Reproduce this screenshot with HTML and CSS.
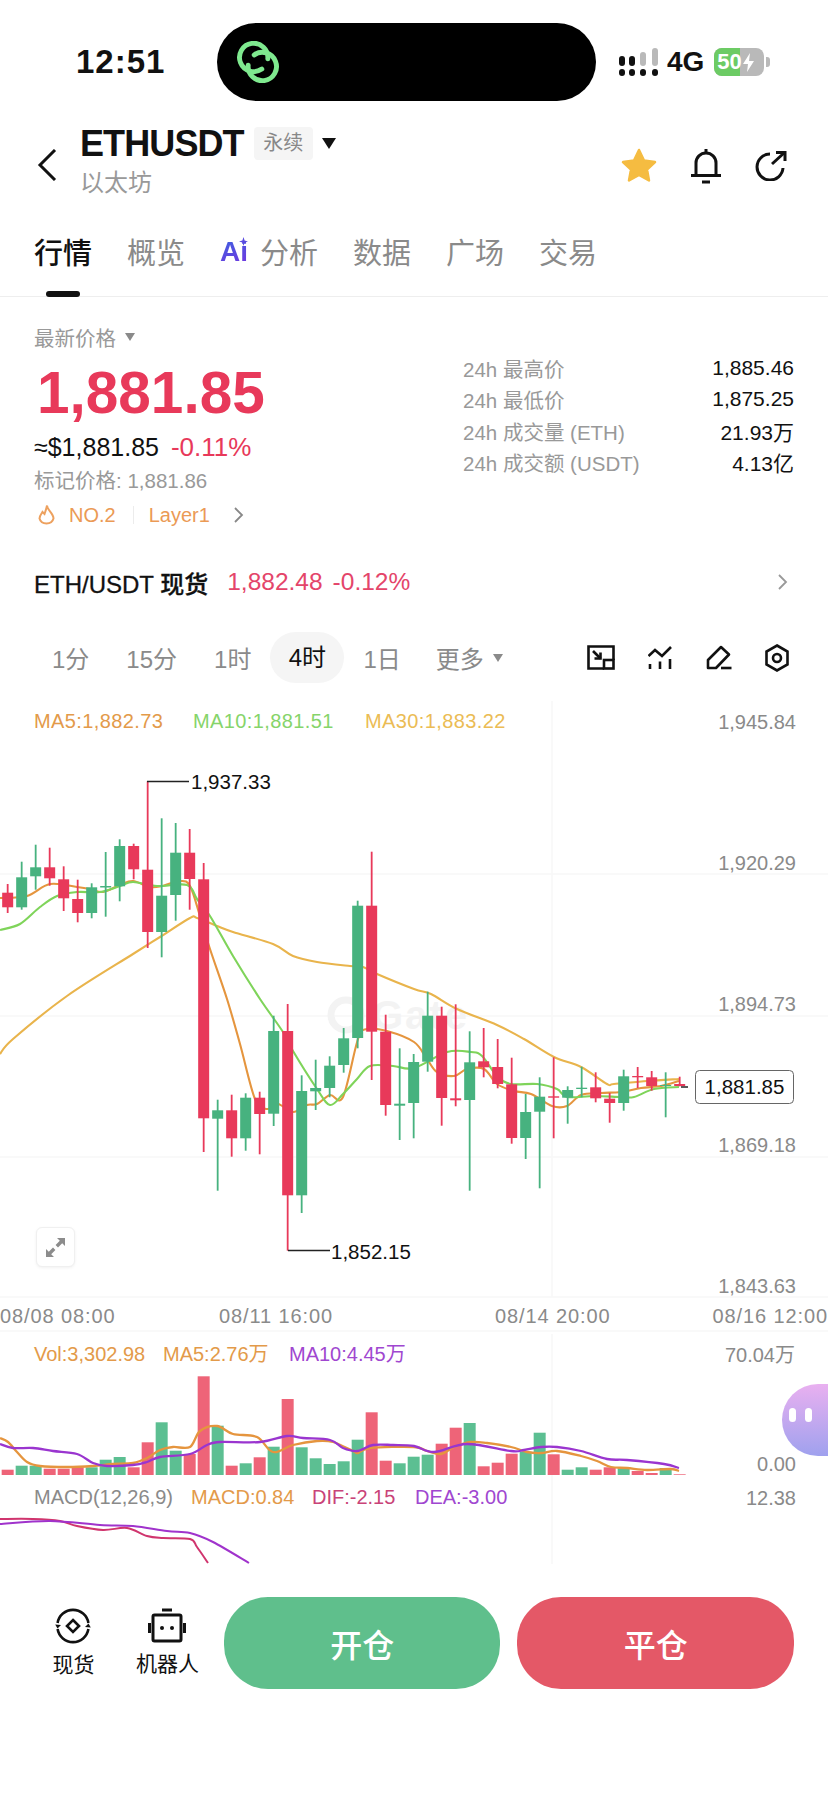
FILE: index.html
```html
<!DOCTYPE html>
<html lang="zh-CN">
<head>
  <meta charset="UTF-8" />
  <title>ETHUSDT</title>
  <link rel="stylesheet" href="styles.css">
</head>
<body>
  <div class="statusbar">
    <div class="clock">12:51</div>
    <div class="island">
      <svg class="island-logo" width="48" height="42" viewBox="0 0 44 38" fill="none" stroke="#7fe98f" stroke-width="4.5" stroke-linecap="round">
        <path d="M25.5 25.5 A13 13 0 1 1 31 16"/>
        <path d="M18.5 12.5 A13 13 0 1 1 13 22"/>
      </svg>
    </div>
    <div class="sys">
      <svg width="40" height="28" viewBox="0 0 40 28">
        <g fill="#111">
          <rect x="0" y="8" width="6" height="10" rx="3"/><rect x="0" y="21" width="6" height="7" rx="3"/>
          <rect x="10" y="8" width="6" height="10" rx="3"/><rect x="10" y="21" width="6" height="7" rx="3"/>
          <rect x="21" y="21" width="6" height="7" rx="3"/><rect x="33" y="21" width="6" height="7" rx="3"/>
        </g>
        <g fill="#b9b9b9">
          <rect x="21" y="4" width="6" height="14" rx="3"/><rect x="33" y="0" width="6" height="18" rx="3"/>
        </g>
      </svg>
      <span class="net">4G</span>
      <div class="battery">
        <div class="battery-level"></div>
        <span class="battery-text">50</span>
        <svg class="battery-bolt" width="11" height="19" viewBox="0 0 11 19"><path d="M7 0 L0 11 H5 L4 19 L11 8 H6 Z" fill="#fff"/></svg>
      </div>
      <div class="battery-tip"></div>
    </div>
  </div>

  <div class="topbar">
    <svg class="back" width="20" height="32" viewBox="0 0 20 32" fill="none" stroke="#111" stroke-width="3"><path d="M18 1 L3 16 L18 31"/></svg>
    <div class="title-block">
      <div class="title-row">
        <span class="symbol">ETHUSDT</span>
        <span class="badge">永续</span>
        <span class="caret caret-black"></span>
      </div>
      <div class="subtitle">以太坊</div>
    </div>
    <div class="top-actions">
      <svg width="36" height="35" viewBox="0 0 36 35"><path d="M18 2 L23 12.5 L34 14 L26 21.5 L28 32.5 L18 27 L8 32.5 L10 21.5 L2 14 L13 12.5 Z" fill="#f5bc41" stroke="#f5bc41" stroke-width="2.5" stroke-linejoin="round"/></svg>
      <svg width="32" height="36" viewBox="0 0 32 36" fill="none" stroke="#111" stroke-width="3"><path d="M6 27 V15 a10 10 0 0 1 20 0 V27"/><path d="M1 27.5 H31"/><path d="M16 1 V5"/><path d="M12 34 H20"/></svg>
      <svg width="33" height="31" viewBox="0 0 33 31" fill="none" stroke="#111" stroke-width="3"><path d="M15 4 A13 13 0 1 0 28 18"/><path d="M17 14 L29 3"/><path d="M21 2.5 H30 V11"/></svg>
    </div>
  </div>

  <div class="tabs">
    <div class="tab active">行情</div>
    <div class="tab">概览</div>
    <div class="tab tab-ai">
      <span class="ai-mark">Ai<svg class="ai-spark" width="9" height="9" viewBox="0 0 9 9"><path d="M4.5 0 L5.6 3.4 L9 4.5 L5.6 5.6 L4.5 9 L3.4 5.6 L0 4.5 L3.4 3.4 Z" fill="#5a4be0"/></svg></span>
      <span>分析</span>
    </div>
    <div class="tab">数据</div>
    <div class="tab">广场</div>
    <div class="tab">交易</div>
  </div>

  <div class="info">
    <div class="info-left">
      <div class="latest-label">最新价格<span class="caret caret-gray"></span></div>
      <div class="price">1,881.85</div>
      <div class="usd-row"><span class="usd">≈$1,881.85</span><span class="down">-0.11%</span></div>
      <div class="mark-price">标记价格: 1,881.86</div>
      <div class="tag-row">
        <svg width="19" height="22" viewBox="0 0 19 22" fill="none" stroke="#eda15f" stroke-width="2"><path d="M10 1.5 C10 6 16.5 9 16.5 14.5 A7.2 6.5 0 0 1 2.5 14.5 C2.5 11.5 4.5 10 5.5 8 C6.5 9 7 9.5 7.5 10 C8.5 7 9.5 4.5 10 1.5 Z"/></svg>
        <span class="tag-text tag-rank">NO.2</span>
        <span class="tag-line"></span>
        <span class="tag-text">Layer1</span>
        <svg class="tag-arrow" width="11" height="16" viewBox="0 0 11 16" fill="none" stroke="#888" stroke-width="1.8"><path d="M2 1 L9 8 L2 15"/></svg>
      </div>
    </div>
    <div class="stats">
      <div class="stat"><span>24h 最高价</span><b>1,885.46</b></div>
      <div class="stat"><span>24h 最低价</span><b>1,875.25</b></div>
      <div class="stat"><span>24h 成交量 (ETH)</span><b>21.93万</b></div>
      <div class="stat"><span>24h 成交额 (USDT)</span><b>4.13亿</b></div>
    </div>
  </div>

  <div class="spot">
    <span class="spot-name">ETH/USDT 现货</span>
    <span class="spot-num">1,882.48</span>
    <span class="spot-num spot-pct">-0.12%</span>
    <svg class="spot-arrow" width="11" height="16" viewBox="0 0 11 16" fill="none" stroke="#999" stroke-width="1.8"><path d="M2 1 L9 8 L2 15"/></svg>
  </div>

  <div class="periods">
    <span class="period">1分</span>
    <span class="period">15分</span>
    <span class="period">1时</span>
    <span class="period on">4时</span>
    <span class="period">1日</span>
    <span class="period more">更多<span class="caret caret-gray"></span></span>
    <div class="tools">
      <svg width="28" height="25" viewBox="0 0 28 25" fill="none" stroke="#111" stroke-width="2.6"><path d="M17 23.5 H1.5 V1.5 H26.5 V15"/><rect x="17" y="15" width="9.5" height="8.5"/><path d="M6 6 L13.5 13.5"/><path d="M13.5 7.5 V13.5 H7.5"/></svg>
      <svg width="24" height="24" viewBox="0 0 24 24" fill="none" stroke="#111" stroke-width="2.6"><path d="M0.5 10 L7 4 L14 10 L23 1"/><path d="M2 18 V23"/><path d="M12 15.5 V23"/><path d="M22 13 V23"/></svg>
      <svg width="26" height="25" viewBox="0 0 26 25" fill="none" stroke="#111" stroke-width="2.6" stroke-linejoin="round"><path d="M2 15 L15 2 L23 9.5 L10 23 H2 Z"/><path d="M15 23 H25.5"/></svg>
      <svg width="24" height="28" viewBox="0 0 24 28" fill="none" stroke="#111" stroke-width="2.6"><path d="M12 1.5 L22.5 7.5 V20.5 L12 26.5 L1.5 20.5 V7.5 Z"/><circle cx="12" cy="14" r="4"/></svg>
    </div>
  </div>

  <div class="chart">
    <svg id="chartSvg" width="828" height="865" viewBox="0 700 828 865">
      <g class="grid">
        <path d="M0 875 H828 M0 1017 H828 M0 1158 H828 M0 1298 H828 M0 1332 H828"/>
        <path d="M552 702 V1298 M552 1335 V1565"/>
      </g>
      <circle class="watermark-ring" cx="346" cy="1016" r="15"/>
      <text class="watermark" x="372" y="1030">Gate</text>
      <g id="maLines"></g>
      <g id="candles"></g>
      <g id="volBars"></g>
      <g id="volLines"></g>
      <g id="macdLines"></g>

      <text class="t legend c-ma5" x="34" y="729">MA5:1,882.73</text>
      <text class="t legend c-ma10" x="193" y="729">MA10:1,881.51</text>
      <text class="t legend c-ma30" x="365" y="729">MA30:1,883.22</text>

      <text class="t axis end" x="796" y="730">1,945.84</text>
      <text class="t axis end" x="796" y="871">1,920.29</text>
      <text class="t axis end" x="796" y="1012">1,894.73</text>
      <text class="t axis end" x="796" y="1153">1,869.18</text>
      <text class="t axis end" x="796" y="1294">1,843.63</text>

      <path class="mark-line" d="M147 782.5 H189"/>
      <text class="t mark" x="191" y="790">1,937.33</text>
      <path class="mark-line" d="M288 1251.5 H330"/>
      <text class="t mark" x="331" y="1260">1,852.15</text>

      <path class="mark-line" d="M681 1088 H688"/>
      <rect class="last-box" x="695.5" y="1071.5" width="98" height="33" rx="4"/>
      <text class="t mark mid" x="744.5" y="1095">1,881.85</text>

      <text class="t axis time" x="0" y="1324">08/08 08:00</text>
      <text class="t axis time" x="219" y="1324">08/11 16:00</text>
      <text class="t axis time" x="495" y="1324">08/14 20:00</text>
      <text class="t axis time end" x="828" y="1324">08/16 12:00</text>

      <text class="t c-ma5" x="34" y="1362">Vol:3,302.98</text>
      <text class="t c-ma5" x="163" y="1362">MA5:2.76万</text>
      <text class="t c-purple" x="289" y="1362">MA10:4.45万</text>
      <text class="t axis end" x="795" y="1363">70.04万</text>
      <text class="t axis end" x="796" y="1472">0.00</text>

      <text class="t axis" x="34" y="1505">MACD(12,26,9)</text>
      <text class="t c-ma5" x="191" y="1505">MACD:0.84</text>
      <text class="t c-dif" x="312" y="1505">DIF:-2.15</text>
      <text class="t c-purple" x="415" y="1505">DEA:-3.00</text>
      <text class="t axis end" x="796" y="1506">12.38</text>
    </svg>

    <div class="expand">
      <svg width="21" height="21" viewBox="0 0 21 21" fill="#8c8c8c"><path d="M12 1 H20 V9 L17.2 6.2 L13 10.4 L10.6 8 L14.8 3.8 Z"/><path d="M9 20 H1 V12 L3.8 14.8 L8 10.6 L10.4 13 L6.2 17.2 Z"/></svg>
    </div>
    <div class="assistant"><span></span><span></span></div>
  </div>

  <div class="actions">
    <div class="tool">
      <svg width="36" height="36" viewBox="0 0 36 36" fill="none" stroke="#111" stroke-width="2.6">
        <path d="M2.6 15 A15.6 15.6 0 0 1 33.4 15"/>
        <path d="M33.4 21 A15.6 15.6 0 0 1 2.6 21"/>
        <path d="M30 19 L33.5 15.5 L35.8 19.5 Z" fill="#111" stroke="none"/>
        <path d="M6 17 L2.5 20.5 L0.2 16.5 Z" fill="#111" stroke="none"/>
        <path d="M18 12 L24 18 L18 24 L12 18 Z"/>
      </svg>
      <span>现货</span>
    </div>
    <div class="tool">
      <svg width="38" height="35" viewBox="0 0 38 35" fill="none" stroke="#111" stroke-width="3">
        <path d="M14 2 H24"/>
        <rect x="5" y="7" width="28" height="26" rx="1.5"/>
        <path d="M1.5 15 V25 M36.5 15 V25"/>
        <circle cx="14" cy="20" r="2" fill="#111" stroke="none"/>
        <circle cx="24" cy="20" r="2" fill="#111" stroke="none"/>
      </svg>
      <span>机器人</span>
    </div>
    <button class="btn btn-open">开仓</button>
    <button class="btn btn-close">平仓</button>
  </div>

  <script src="chart.js"></script>
</body>
</html>
```

FILE: styles.css
```css
* {
  box-sizing: border-box;
  margin: 0;
  padding: 0;
}

body {
  width: 828px;
  height: 1796px;
  overflow: hidden;
  background: #fff;
  color: #111;
  font-family: "Liberation Sans", "Noto Sans CJK SC", sans-serif;
}

/* status bar */
.statusbar {
  display: flex;
  height: 124px;
  padding-top: 23px;
}

.clock {
  width: 217px;
  height: 78px;
  padding-left: 76px;
  font-size: 33px;
  font-weight: 700;
  line-height: 78px;
  letter-spacing: 1px;
}

.island {
  display: flex;
  align-items: center;
  width: 379px;
  height: 78px;
  padding-left: 17px;
  border-radius: 39px;
  background: #000;
}

.sys {
  display: flex;
  align-items: center;
  height: 78px;
  padding-left: 23px;
}

.net {
  margin-left: 8px;
  font-size: 28px;
  font-weight: 700;
}

.battery {
  position: relative;
  display: flex;
  align-items: center;
  width: 50px;
  height: 28px;
  margin-left: 10px;
  border-radius: 8px;
  background: #b9b9b9;
  overflow: hidden;
}

.battery-level {
  position: absolute;
  left: 0;
  top: 0;
  width: 26px;
  height: 100%;
  background: #6ccb64;
}

.battery-text {
  position: relative;
  margin-left: 3px;
  color: #fff;
  font-size: 22px;
  font-weight: 700;
}

.battery-bolt {
  position: relative;
  margin-left: 1px;
}

.battery-tip {
  width: 4px;
  height: 10px;
  margin-left: 2px;
  border-radius: 0 3px 3px 0;
  background: #b9b9b9;
}

/* header */
.topbar {
  display: flex;
  height: 76px;
  padding: 3px 40px 0 37px;
}

.back {
  margin-top: 22px;
}

.title-block {
  margin-left: 23px;
}

.title-row {
  display: flex;
  align-items: center;
  height: 33px;
}

.symbol {
  font-size: 36px;
  font-weight: 700;
  letter-spacing: -0.9px;
}

.badge {
  width: 59px;
  height: 33px;
  margin-left: 10px;
  border-radius: 4px;
  background: #f5f5f5;
  color: #888;
  font-size: 20px;
  line-height: 33px;
  text-align: center;
}

.caret {
  display: inline-block;
  width: 0;
  height: 0;
  border-style: solid;
  border-color: transparent;
}

.caret-black {
  margin-left: 9px;
  border-width: 11px 7.5px 0;
  border-top-color: #111;
}

.caret-gray {
  margin-left: 9px;
  border-width: 8px 5.5px 0;
  border-top-color: #8a8a8a;
}

.subtitle {
  height: 40px;
  color: #999;
  font-size: 24px;
  line-height: 46px;
}

.top-actions {
  display: flex;
  align-items: center;
  gap: 33px;
  height: 35px;
  margin-left: auto;
  margin-top: 21px;
}

/* tabs */
.tabs {
  display: flex;
  gap: 35px;
  height: 97px;
  padding: 37px 0 0 34px;
  border-bottom: 1px solid #eee;
}

.tab {
  position: relative;
  height: 34px;
  color: #8a8a8a;
  font-size: 29px;
  line-height: 34px;
}

.tab.active {
  color: #111;
  font-weight: 500;
}

.tab.active::after {
  content: "";
  position: absolute;
  left: 12px;
  top: 54px;
  width: 34px;
  height: 6px;
  border-radius: 3px;
  background: #111;
}

.tab-ai {
  display: flex;
  gap: 11px;
}

.ai-mark {
  position: relative;
  width: 29px;
  background: linear-gradient(160deg, #3a63e0, #7d2ee0);
  -webkit-background-clip: text;
  background-clip: text;
  color: transparent;
  font-size: 28px;
  font-weight: 700;
  line-height: 30px;
}

.ai-spark {
  position: absolute;
  left: 19px;
  top: 0;
}

/* price info */
.info {
  display: flex;
  padding: 25px 34px 0;
}

.info-left {
  width: 429px;
}

.latest-label {
  display: flex;
  align-items: center;
  height: 30px;
  color: #999;
  font-size: 20.5px;
}

.price {
  height: 60px;
  margin-top: 9px;
  padding-left: 3px;
  color: #e8395a;
  font-size: 58.5px;
  font-weight: 700;
  line-height: 64px;
}

.usd-row {
  display: flex;
  align-items: center;
  gap: 12px;
  height: 34px;
  margin-top: 9px;
  font-size: 25px;
}

.down {
  color: #e8395a;
  font-size: 26px;
}

.mark-price {
  height: 30px;
  margin-top: 2px;
  color: #999;
  font-size: 20.5px;
  line-height: 30px;
}

.tag-row {
  display: flex;
  align-items: center;
  height: 30px;
  margin-top: 4px;
  padding-left: 3px;
}

.tag-text {
  color: #eb9a55;
  font-size: 20px;
}

.tag-rank {
  margin-left: 13px;
}

.tag-line {
  width: 1px;
  height: 18px;
  margin: 0 15px 0 17px;
  background: #ececec;
}

.tag-arrow {
  margin-left: 23px;
}

.stats {
  display: grid;
  grid-auto-rows: 31.5px;
  width: 331px;
  margin-top: 30px;
}

.stat {
  display: flex;
  justify-content: space-between;
  align-items: center;
  color: #999;
  font-size: 20.5px;
}

.stat b {
  color: #111;
  font-size: 21px;
  font-weight: 400;
}

/* spot row */
.spot {
  display: flex;
  align-items: center;
  height: 44px;
  margin-top: 30px;
  padding: 0 40px 0 34px;
  font-size: 24px;
}

.spot-name {
  font-weight: 500;
  -webkit-text-stroke: 0.3px #111;
}

.spot-num {
  margin-left: 19px;
  color: #e4456a;
  font-size: 24.5px;
}

.spot-pct {
  margin-left: 10px;
}

.spot-arrow {
  margin-left: auto;
}

/* chart period row */
.periods {
  display: flex;
  align-items: center;
  height: 51px;
  margin: 28px 0 16px;
  padding-left: 52px;
  color: #8a8a8a;
  font-size: 24px;
}

.period {
  margin-right: 37px;
}

.period.on {
  width: 74px;
  height: 51px;
  margin: 0 19px 0 -18px;
  border-radius: 26px;
  background: #f5f5f5;
  color: #111;
  line-height: 51px;
  text-align: center;
}

.more {
  display: flex;
  align-items: center;
  margin-left: -2px;
}

.tools {
  display: flex;
  align-items: center;
  gap: 33.5px;
  margin-left: auto;
  padding-right: 39px;
}

/* chart */
.chart {
  position: relative;
  height: 865px;
}

.chart svg {
  display: block;
}

.grid path {
  fill: none;
  stroke: #f7f7f7;
  stroke-width: 1.5;
}

.watermark {
  fill: #f3f3f3;
  font-size: 40px;
  font-weight: 700;
  letter-spacing: 2px;
}

.watermark-ring {
  fill: none;
  stroke: #f3f3f3;
  stroke-width: 7;
}

.t {
  font-size: 20px;
}

.legend {
  letter-spacing: 0.4px;
}

.end {
  text-anchor: end;
}

.mid {
  text-anchor: middle;
}

.axis {
  fill: #8a8a8a;
}

.time {
  letter-spacing: 0.9px;
}

.c-ma5 {
  fill: #e39a4a;
}

.c-ma10 {
  fill: #86d46a;
}

.c-ma30 {
  fill: #ebbc55;
}

.c-purple {
  fill: #a047d0;
}

.c-dif {
  fill: #c94378;
}

.mark {
  fill: #111;
  font-size: 20.5px;
}

.mark-line {
  fill: none;
  stroke: #222;
  stroke-width: 1.5;
}

.last-box {
  fill: #fff;
  stroke: #666;
  stroke-width: 1;
}

.expand {
  position: absolute;
  left: 36px;
  top: 528px;
  display: flex;
  align-items: center;
  justify-content: center;
  width: 39px;
  height: 40px;
  border: 1px solid #f0f0f0;
  border-radius: 6px;
  background: #fff;
  box-shadow: 0 1px 3px rgba(0, 0, 0, 0.06);
}

.assistant {
  position: absolute;
  left: 782px;
  top: 685px;
  display: flex;
  align-items: center;
  gap: 9px;
  width: 46px;
  height: 72px;
  padding: 0 0 10px 7px;
  border-radius: 36px 0 0 36px;
  background: linear-gradient(180deg, #e9b0f0, #9fa1ee);
}

.assistant span {
  width: 7px;
  height: 14px;
  border-radius: 4px;
  background: #fff;
}

/* bottom actions */
.actions {
  display: flex;
  padding: 33px 34px 0 42px;
}

.tool {
  display: flex;
  flex-direction: column;
  align-items: center;
  width: 63px;
  margin-right: 31px;
  padding-top: 11px;
  font-size: 21px;
}

.tool span {
  margin-top: 7px;
  line-height: 28px;
  white-space: nowrap;
}

.btn {
  width: 277px;
  height: 92px;
  border: none;
  border-radius: 44px;
  color: #fff;
  font-family: inherit;
  font-size: 32px;
  font-weight: 500;
}

.btn-open {
  margin-left: -6px;
  background: #5fbf8c;
}

.btn-close {
  margin-left: 17px;
  background: #e45867;
}
```

FILE: chart.js
```js
const NS = "http://www.w3.org/2000/svg";
const RED = "#e8395a";
const GREEN = "#47b27f";
const BAR_RED = "#ee6478";
const BAR_GREEN = "#5cbf92";
const BASE = 1476;

// color, wick top, wick bottom, body top, body bottom
const candles = [
  ["r",885,914,893.7,908.3],["g",862.7,910.7,878.3,908.3],["g",845.7,890.7,868.3,877.3],["r",848.7,886.7,868.3,879.3],
  ["r",867.3,912,880.3,899.3],["r",880.7,923.3,900,914],["g",884.3,919.3,888.3,914],["g",853,917.7,887,888.5],
  ["g",840.3,902.3,847,887.3],["r",844.7,880.3,847,870.3],["r",782.3,949,870.7,933],["g",819.3,958.3,896.7,933],
  ["g",824,921.7,853.7,896],["r",830,910.7,853.7,880],["r",864,1153,880.3,1119.3],["g",1100.7,1191.7,1111.3,1119.7],
  ["r",1095.7,1157.7,1111.3,1139.3],["g",1094.3,1151.7,1098.7,1139.3],["r",1092.7,1155.3,1098.7,1115],["g",1016.7,1127,1032,1114.7],
  ["r",1005,1251.7,1032,1196.3],["g",1076.3,1214,1092,1196.3],["g",1060.7,1111,1089,1092.3],["g",1057.3,1098.3,1066.7,1089],
  ["g",1029,1073.7,1039.3,1066],["g",901.7,1049.3,906.7,1039],["r",852.7,1081,906.7,1032.7],["r",1015.7,1116.7,1032.7,1106],
  ["g",1049.3,1141,1104.7,1106.7],["g",1055,1139.3,1063,1104],["g",992.7,1072.7,1016.7,1062.7],["r",1007.7,1126.7,1016.7,1099],
  ["r",1005.3,1107.3,1099.3,1101.3],["g",1032.3,1191.7,1063.3,1101],["r",1029,1078.3,1062.3,1068.3],["r",1040,1089.3,1068,1085],
  ["r",1058.7,1144.7,1085.3,1139],["g",1095,1160,1113,1139],["g",1078.3,1189.3,1097.7,1112.7],["r",1058.3,1139.3,1097.3,1098.7],
  ["g",1087.3,1124.7,1091,1098.7],["g",1067.7,1098.3,1088.7,1090],["r",1073.3,1103.3,1088.3,1099.3],["r",1094,1123.7,1099.7,1104],
  ["g",1070.7,1111.7,1077.3,1104],["r",1068,1089,1077,1078.3],["r",1072,1091.7,1078.3,1087],["g",1073.3,1118.3,1086,1087],
  ["r",1077.7,1087.3,1085,1087]
];

const volumes = [
  ["r",5.3],["g",9.3],["g",9.3],["r",6.3],["r",6.3],["r",7.7],["g",7.7],["g",15.3],["g",18],["r",7.7],
  ["r",32.7],["g",52.7],["g",24.3],["r",21],["r",98.7],["g",49.3],["r",9.3],["g",11.7],["r",17.7],["g",28.3],
  ["r",76],["g",27.7],["g",16.7],["g",11],["g",13.7],["g",35.3],["r",62.7],["r",14.3],["g",11.7],["g",18.3],
  ["g",20.3],["r",31.3],["r",47.3],["g",52],["r",8.7],["r",12.3],["r",21.3],["g",23.3],["g",42.3],["r",20.7],
  ["g",5.3],["g",7.7],["r",5.3],["r",7.7],["g",6.7],["r",4],["r",2],["g",7],["r",0.7]
];

const ma5 = [[0,899],[27,897],[50,885],[77,888],[90,890],[103,893],[120,886],[133,882],[150,888],[162,887],[180,882],[190,887],[200,917],[210,950],[227,1000],[240,1045],[255,1100],[267,1110],[278,1105],[293,1113],[307,1106],[317,1105],[330,1096],[343,1098],[358,1040],[367,1030],[387,1032],[414,1043],[427,1060],[437,1073],[454,1077],[467,1070],[484,1070],[497,1085],[514,1092],[531,1095],[552,1107],[567,1107],[581,1096],[601,1094],[621,1093],[641,1089],[661,1087],[679,1082]];
const ma10 = [[0,931],[20,925],[40,908],[57,897],[77,893],[100,893],[120,887],[133,883],[157,887],[187,886],[197,900],[210,917],[233,957],[260,1000],[283,1033],[293,1052],[317,1090],[330,1106],[343,1095],[357,1080],[370,1067],[393,1067],[414,1069],[447,1053],[471,1053],[482,1057],[497,1077],[511,1085],[537,1085],[557,1090],[567,1098],[594,1097],[621,1098],[634,1098],[654,1090],[679,1088]];
const ma30 = [[0,1055],[13,1040],[67,997],[133,955],[160,938],[190,919],[197,919],[217,927],[233,933],[273,945],[293,957],[317,963],[350,967],[363,968],[377,975],[414,990],[431,995],[457,1010],[497,1026],[524,1040],[554,1058],[581,1068],[607,1085],[614,1085],[647,1082],[679,1080]];

const volMa5 = [[0,1439],[8,1443],[17,1453],[27,1463],[40,1467],[67,1468],[93,1467],[113,1465],[133,1464],[147,1459],[160,1451],[173,1448],[190,1448],[200,1432],[217,1427],[233,1435],[257,1438],[273,1453],[293,1446],[317,1442],[333,1443],[353,1452],[358,1454],[370,1449],[414,1448],[427,1452],[441,1455],[454,1448],[471,1443],[487,1444],[511,1448],[527,1453],[541,1454],[557,1452],[581,1457],[597,1462],[611,1468],[627,1469],[647,1471],[671,1470],[679,1472]];
const volMa10 = [[0,1445],[13,1449],[33,1449],[53,1452],[77,1455],[93,1464],[107,1467],[133,1466],[147,1463],[160,1458],[190,1455],[207,1446],[220,1443],[260,1443],[287,1437],[303,1439],[330,1441],[343,1449],[357,1452],[373,1446],[393,1446],[414,1447],[434,1453],[467,1445],[511,1452],[524,1451],[541,1448],[557,1448],[581,1452],[607,1460],[627,1461],[664,1465],[679,1469]];
const dif = [[0,1520],[33,1520],[60,1522],[77,1527],[103,1531],[127,1529],[147,1537],[163,1539],[190,1540],[197,1548],[208,1564]];
const dea = [[0,1525],[50,1522],[100,1526],[133,1527],[167,1532],[190,1534],[213,1543],[249,1564]];

function el(parent, name, attrs) {
  const node = document.createElementNS(NS, name);
  for (const key in attrs) node.setAttribute(key, attrs[key]);
  parent.appendChild(node);
  return node;
}

// catmull-rom through the points, so the averages bend like the real ones
function smooth(pts) {
  let d = "M" + pts[0][0] + " " + pts[0][1];
  for (let i = 0; i < pts.length - 1; i++) {
    const p0 = pts[i - 1] || pts[i];
    const p1 = pts[i];
    const p2 = pts[i + 1];
    const p3 = pts[i + 2] || p2;
    const c1x = p1[0] + (p2[0] - p0[0]) / 6;
    const c1y = p1[1] + (p2[1] - p0[1]) / 6;
    const c2x = p2[0] - (p3[0] - p1[0]) / 6;
    const c2y = p2[1] - (p3[1] - p1[1]) / 6;
    d += ` C${c1x} ${c1y} ${c2x} ${c2y} ${p2[0]} ${p2[1]}`;
  }
  return d;
}

function line(group, pts, color, width) {
  el(group, "path", { d: smooth(pts), fill: "none", stroke: color, "stroke-width": width });
}

const maGroup = document.getElementById("maLines");
line(maGroup, ma30, "#e9b44c", 2.1);
line(maGroup, ma5, "#e5953e", 2.1);
line(maGroup, ma10, "#7fd45a", 2.1);

const candleGroup = document.getElementById("candles");
candles.forEach(function (c, i) {
  const x = 7.67 + 14 * i;
  const color = c[0] === "r" ? RED : GREEN;
  el(candleGroup, "rect", { x: x - 0.9, y: c[1], width: 1.8, height: c[2] - c[1], fill: color });
  el(candleGroup, "rect", { x: x - 5.5, y: c[3], width: 11, height: c[4] - c[3], fill: color });
});

const barGroup = document.getElementById("volBars");
volumes.forEach(function (v, i) {
  const x = 7.67 + 14 * i;
  el(barGroup, "rect", { x: x - 6, y: BASE - v[1], width: 12, height: v[1], fill: v[0] === "r" ? BAR_RED : BAR_GREEN });
});

const volGroup = document.getElementById("volLines");
line(volGroup, volMa5, "#e5953e", 2.3);
line(volGroup, volMa10, "#9a35cf", 2.3);

const macdGroup = document.getElementById("macdLines");
line(macdGroup, dif, "#d0356e", 2);
line(macdGroup, dea, "#a033cc", 2);
```
